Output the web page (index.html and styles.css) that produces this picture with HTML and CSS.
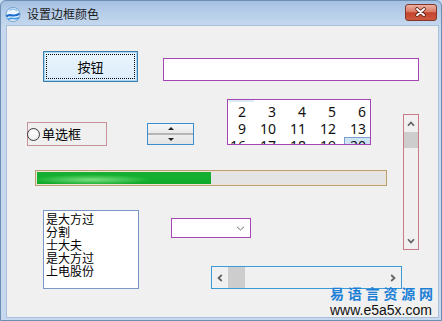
FILE: index.html
```html
<!DOCTYPE html>
<html lang="zh-CN">
<head>
	<meta charset="UTF-8">
	<title>设置边框颜色</title>
	<link rel="stylesheet" href="styles.css">
</head>
<body>
	<div class="window">
		<div class="titlebar">
			<svg class="app-icon" viewBox="0 0 16 16" width="16" height="16">
				<circle cx="8" cy="8.5" r="7" fill="#eaf5fd" stroke="#5b8fc4" stroke-width="0.8"/>
				<path d="M1.5 10.5 C4.5 6.5 9 12.5 14.5 7.5" stroke="#1d6ccc" stroke-width="2.2" fill="none"/>
				<path d="M3 13.5 C6 10.5 10 14.5 14 11.5" stroke="#3f98e6" stroke-width="1.6" fill="none"/>
				<path d="M4.5 4.5 C7 2.5 10.5 3 12 5" stroke="#86bdeb" stroke-width="1.2" fill="none"/>
			</svg>
			<span class="title">设置边框颜色</span>
			<div class="close">
				<svg viewBox="0 0 32 17" width="30" height="15">
					<path d="M11.5 4.5 L19.5 11.5 M19.5 4.5 L11.5 11.5" stroke="#5b1a10" stroke-width="4" stroke-linecap="round"/>
					<path d="M11.5 4.5 L19.5 11.5 M19.5 4.5 L11.5 11.5" stroke="#fff" stroke-width="2.2" stroke-linecap="round"/>
				</svg>
			</div>
		</div>

		<div class="client">
			<div class="row-top">
				<div class="btn"><span>按钮</span></div>
				<div class="edit"></div>
			</div>

			<div class="body">
				<div class="left">
					<div class="row-mid">
						<div class="radio"><span class="radio-dot"></span>单选框</div>
						<div class="spin">
							<div class="spin-up"><i class="tri-up"></i></div>
							<div class="spin-down"><i class="tri-down"></i></div>
						</div>
						<div class="calendar">
							<div class="cal-grid">
								<span>2</span><span>3</span><span>4</span><span>5</span><span>6</span>
								<span>9</span><span>10</span><span>11</span><span>12</span><span>13</span>
								<span>16</span><span>17</span><span>18</span><span>19</span><span class="today">20</span>
							</div>
						</div>
					</div>

					<div class="progress"><div class="progress-fill" style="width: 50%"></div></div>

					<div class="row-bottom">
						<ul class="listbox">
							<li>是大方过</li>
							<li>分割</li>
							<li>士大夫</li>
							<li>是大方过</li>
							<li>上电股份</li>
						</ul>
						<div class="col-right">
							<div class="combo">
								<svg viewBox="0 0 9 5" width="9" height="5"><path d="M1 0.8 L4.5 4 L8 0.8" stroke="#6a6a6a" stroke-width="1" fill="none"/></svg>
							</div>
							<div class="hscroll">
								<div class="sb-btn-h">
									<svg viewBox="0 0 6 8" width="6" height="8"><path d="M4.8 1 L1.5 4 L4.8 7" stroke="#606060" stroke-width="1.7" fill="none"/></svg>
								</div>
								<div class="thumb-h"></div>
								<div class="track"></div>
								<div class="sb-btn-h">
									<svg viewBox="0 0 6 8" width="6" height="8"><path d="M1.2 1 L4.5 4 L1.2 7" stroke="#606060" stroke-width="1.7" fill="none"/></svg>
								</div>
							</div>
						</div>
					</div>
				</div>

				<div class="vscroll">
					<div class="sb-btn-v">
						<svg viewBox="0 0 8 6" width="8" height="6"><path d="M1 4.8 L4 1.5 L7 4.8" stroke="#606060" stroke-width="1.7" fill="none"/></svg>
					</div>
					<div class="thumb-v"></div>
					<div class="track"></div>
					<div class="sb-btn-v">
						<svg viewBox="0 0 8 6" width="8" height="6"><path d="M1 1.2 L4 4.5 L7 1.2" stroke="#606060" stroke-width="1.7" fill="none"/></svg>
					</div>
				</div>
			</div>
		</div>

		<div class="watermark">
			<div class="wm-name">易语言资源网</div>
			<div class="wm-url">www.e5a5x.com</div>
		</div>
	</div>
</body>
</html>
```

FILE: styles.css
```css
*{
	margin: 0;
	padding: 0;
	box-sizing: border-box;
}
ul,li{
	list-style: none;
}
html,body{
	width: 442px;
	height: 321px;
	overflow: hidden;
}
body{
	font-family: "Noto Sans CJK SC", sans-serif;
	font-size: 12px;
	color: #000;
	background-color: #c9dbef;
}
.window{
	position: relative;
	height: 321px;
	display: flex;
	flex-direction: column;
	background: linear-gradient(#a4c0e1, #b9d0ea 14px, #c6d9ee 26px, #c6d9ee);
	border: 1px solid #6d8db3;
	border-radius: 6px 6px 0 0;
}

/* title bar */
.titlebar{
	height: 25px;
	display: flex;
	align-items: center;
	padding-left: 4px;
	flex-shrink: 0;
}
.app-icon{
	display: block;
	flex-shrink: 0;
}
.title{
	margin-left: 6px;
	font-size: 12px;
	line-height: 16px;
	color: #1a1a1a;
}
.close{
	margin-left: auto;
	margin-right: 4px;
	align-self: flex-start;
	margin-top: 3px;
	width: 32px;
	height: 17px;
	border: 1px solid #83362a;
	border-radius: 3px;
	background: linear-gradient(#eab0a2, #d97a66 45%, #c5432b 52%, #cc5a40);
	display: flex;
	align-items: center;
	justify-content: center;
}
.close svg{
	display: block;
}

/* client area */
.client{
	flex: 1;
	margin: 0 3px 3px 6px;
	background-color: #f0f0f0;
	box-shadow: 0 0 0 1px #a9c0dc;
}
.row-top{
	display: flex;
	align-items: flex-start;
	padding-top: 25px;
}
.btn{
	flex-shrink: 0;
	margin-left: 36px;
	width: 95px;
	height: 31px;
	border: 1px solid #3c7fb1;
	box-shadow: inset 0 0 0 1px #a8d4f4;
	background: linear-gradient(#eaf5fd, #dcecfb);
	display: flex;
	align-items: center;
	justify-content: center;
	position: relative;
}
.btn::after{
	content: "";
	position: absolute;
	left: 2px;
	top: 2px;
	right: 2px;
	bottom: 2px;
	border: 1px dotted #000;
}
.btn span{
	font-size: 13px;
	line-height: 16px;
}
.edit{
	flex-shrink: 0;
	margin-left: 25px;
	margin-top: 7px;
	width: 256px;
	height: 23px;
	background-color: #fff;
	border: 1px solid #a445b6;
}
.body{
	display: flex;
	align-items: flex-start;
}
.left{
	width: 396px;
	flex-shrink: 0;
}
.row-mid{
	display: flex;
	align-items: flex-start;
	margin-top: 17px;
}
.radio{
	flex-shrink: 0;
	margin-left: 20px;
	margin-top: 23px;
	width: 80px;
	height: 24px;
	border: 1px solid #c7939a;
	display: flex;
	align-items: center;
	gap: 2px;
	font-size: 13px;
	line-height: 16px;
}
.radio-dot{
	width: 13px;
	height: 13px;
	margin-left: -1px;
	border: 1px solid #3a3a3a;
	border-radius: 50%;
	background: radial-gradient(circle at 50% 40%, #fff, #e6e6e6);
}
.spin{
	flex-shrink: 0;
	margin-left: 40px;
	margin-top: 24px;
	width: 47px;
	height: 22px;
	border: 1px solid #3d8ccd;
	background-color: #f3f3f3;
}
.spin-up,.spin-down{
	height: 9px;
	display: flex;
	align-items: center;
	justify-content: center;
}
.spin-up{
	background: linear-gradient(#f6f6f6, #e9e9e9);
	border-bottom: 2px solid #b4b4b4;
	height: 11px;
}
.spin-down{
	background: linear-gradient(#eeeeee, #e4e4e4);
}
.tri-up{
	width: 0;
	height: 0;
	border-left: 3px solid transparent;
	border-right: 3px solid transparent;
	border-bottom: 3px solid #222;
}
.tri-down{
	width: 0;
	height: 0;
	border-left: 3px solid transparent;
	border-right: 3px solid transparent;
	border-top: 3px solid #222;
}
.calendar{
	flex-shrink: 0;
	margin-left: 33px;
	width: 144px;
	height: 46px;
	border: 1px solid #a445b6;
	background-color: #fff;
	overflow: hidden;
	position: relative;
}
.calendar::before{
	content: "";
	position: absolute;
	left: 1px;
	top: 0;
	width: 25px;
	height: 2px;
	background-color: #dceaf8;
}
.cal-grid{
	display: grid;
	grid-template-columns: repeat(5, 30px);
	grid-auto-rows: 17px;
	padding-top: 3px;
	font-family: "Noto Sans", sans-serif;
	font-size: 14px;
	line-height: 17px;
	color: #111;
}
.cal-grid span{
	text-align: right;
	padding-right: 12px;
}
.cal-grid .today{
	margin-left: -4px;
	padding-right: 11px;
	border: 1px solid #7d9fcb;
	background-color: #cde3f6;
	line-height: 15px;
}
.progress{
	margin-top: 24px;
	margin-left: 28px;
	width: 352px;
	height: 16px;
	border: 1px solid #bb9f74;
	box-shadow: inset 0 0 0 1px #efe4d2;
	background-color: #e4e4e4;
	padding: 1px;
}
.progress-fill{
	height: 100%;
	background:
		radial-gradient(ellipse 60px 5px at 55px 65%, rgba(150,235,150,0.8), rgba(150,235,150,0)),
		linear-gradient(#19ad34, #13b030 50%, #0ea82a);
}
.row-bottom{
	display: flex;
	align-items: flex-start;
	margin-top: 24px;
}
.listbox{
	flex-shrink: 0;
	margin-left: 36px;
	width: 96px;
	height: 79px;
	border: 1px solid #7b97c6;
	background-color: #fff;
	padding: 1px 0 0 2px;
	font-size: 12px;
	line-height: 13px;
}
.col-right{
	margin-left: 32px;
	display: flex;
	flex-direction: column;
	align-items: flex-start;
}
.combo{
	margin-top: 8px;
	width: 80px;
	height: 20px;
	border: 1px solid #a445b6;
	background-color: #fff;
	display: flex;
	align-items: center;
	justify-content: flex-end;
	padding-right: 5px;
}
.combo svg{
	display: block;
}
.hscroll{
	margin-left: 40px;
	margin-top: 28px;
	width: 191px;
	height: 23px;
	border: 1px solid #3b9ad6;
	background-color: #f0f0f0;
	display: flex;
}
.sb-btn-h{
	width: 16px;
	flex-shrink: 0;
	display: flex;
	align-items: center;
	justify-content: center;
}
.thumb-h{
	width: 17px;
	flex-shrink: 0;
	background-color: #cdcdcd;
}
.track{
	flex: 1;
}
.vscroll{
	flex-shrink: 0;
	margin-top: 32px;
	width: 16px;
	height: 136px;
	border: 1px solid #c97c87;
	background-color: #f0f0f0;
	display: flex;
	flex-direction: column;
}
.sb-btn-v{
	height: 17px;
	flex-shrink: 0;
	display: flex;
	align-items: center;
	justify-content: center;
}
.thumb-v{
	height: 16px;
	flex-shrink: 0;
	background-color: #cdcdcd;
}
.sb-btn-v svg,.sb-btn-h svg{
	display: block;
}

/* site watermark over the corner */
.watermark{
	position: absolute;
	left: 329px;
	top: 284px;
}
.wm-name{
	font-size: 14px;
	line-height: 17px;
	font-weight: bold;
	letter-spacing: 3.8px;
	color: #1c7fd6;
}
.wm-url{
	font-family: "Liberation Sans", Arial, sans-serif;
	font-size: 14px;
	line-height: 16px;
	color: #111;
}
```
